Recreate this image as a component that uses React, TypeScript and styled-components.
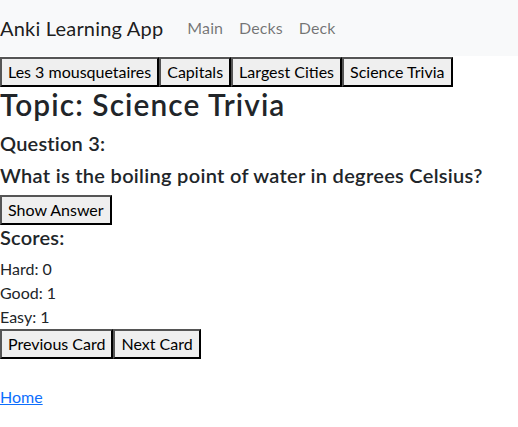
import styled, { createGlobalStyle } from 'styled-components';

const GlobalStyle = createGlobalStyle`
    body {
        margin: 0;
        font-family: 'Segoe UI', Lato, 'Noto Sans', sans-serif;
        font-size: 16px;
        line-height: 1.5;
        color: #212529;
        background: #fff;
    }
`;

const decks = ['Les 3 mousquetaires', 'Capitals', 'Largest Cities', 'Science Trivia'];

const App = () => {
    return (
        <>
            <GlobalStyle />
            <NavBar>
                <Brand>Anki Learning App</Brand>
                <NavLinks>
                    <NavLink>Main</NavLink>
                    <NavLink>Decks</NavLink>
                    <NavLink>Deck</NavLink>
                </NavLinks>
            </NavBar>
            <Page>
                <ButtonRow>
                    {decks.map((d) => (
                        <PlainButton key={d}>{d}</PlainButton>
                    ))}
                </ButtonRow>
                <Title>Topic: Science Trivia</Title>
                <SubTitle>Question 3:</SubTitle>
                <SubTitle $wide>What is the boiling point of water in degrees Celsius?</SubTitle>
                <PlainButton>Show Answer</PlainButton>
                <SubTitle>Scores:</SubTitle>
                <ScoreLine>Hard: 0</ScoreLine>
                <ScoreLine>Good: 1</ScoreLine>
                <ScoreLine>Easy: 1</ScoreLine>
                <ButtonRow>
                    <PlainButton>Previous Card</PlainButton>
                    <PlainButton>Next Card</PlainButton>
                </ButtonRow>
                <HomeLink href="#">Home</HomeLink>
            </Page>
        </>
    );
};

const NavBar = styled.nav`
    display: flex;
    align-items: center;
    height: 56px;
    background-color: #f8f9fa;
`;

const Brand = styled.span`
    font-size: 20px;
    letter-spacing: 0.2px;
    margin-right: 16px;
    color: rgba(0, 0, 0, 0.9);
`;

const NavLinks = styled.div`
    display: flex;
`;

const NavLink = styled.span`
    padding: 8px;
    letter-spacing: 0.1px;
    color: rgba(0, 0, 0, 0.55);
`;

const Page = styled.main`
    padding-top: 1px;
`;

const ButtonRow = styled.div`
    display: flex;
    gap: 0;
`;

const PlainButton = styled.button`
    font: inherit;
    line-height: 1.5;
    color: #000;
    background-color: #efefef;
    border: 2px solid;
    border-color: #555 #000 #000 #555;
    padding: 1px 6px;
    display: block;
`;

const Title = styled.h1`
    margin: 0 0 8px;
    font-size: 29.8px;
    font-weight: 600;
    letter-spacing: 1.1px;
    line-height: 1.2;
`;

const SubTitle = styled.h5<{ $wide?: boolean }>`
    margin: 0 0 8px;
    font-size: 20px;
    font-weight: 600;
    letter-spacing: ${(p) => (p.$wide ? '0.3px' : '0.2px')};
    line-height: 1.2;
`;

const ScoreLine = styled.div`
    line-height: 24px;
`;

const HomeLink = styled.a`
    display: inline-block;
    margin-top: 26px;
    color: #0d6efd;
    text-decoration: underline;
`;

export default App;
